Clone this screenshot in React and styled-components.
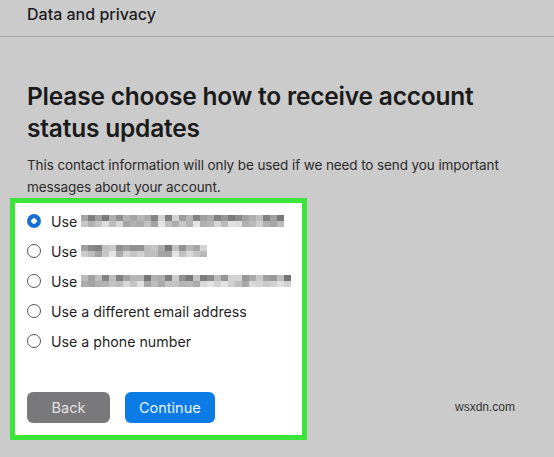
import styled, { createGlobalStyle } from "styled-components";

const GlobalStyle = createGlobalStyle`
  body {
    margin: 0;
    background: #cbcbcb;
    font-family: Inter, "Noto Sans", sans-serif;
    color: #1c1c1e;
  }
`;

// fake pixelated text, shades per column: [top, bottom]
function makeCells(count, seed) {
  const cells = [];
  let s = seed;
  for (let i = 0; i < count; i++) {
    s = (s * 9301 + 49297) % 233280;
    const r = s / 233280;
    s = (s * 9301 + 49297) % 233280;
    const r2 = s / 233280;
    cells.push([Math.round(115 + r * 100), Math.round(160 + r2 * 70)]);
  }
  return cells;
}

const options = [
  { label: "Use", blur: makeCells(29, 7), checked: true },
  { label: "Use", blur: makeCells(18, 31) },
  { label: "Use", blur: makeCells(30, 113) },
  { label: "Use a different email address" },
  { label: "Use a phone number" },
];

function App() {
  return (
    <Page>
      <GlobalStyle />
      <Header>Data and privacy</Header>
      <Content>
        <Title>Please choose how to receive account status updates</Title>
        <Intro>
          This contact information will only be used if we need to send you
          important messages about your account.
        </Intro>
        <Highlight>
          <OptionList>
            {options.map((o, i) => (
              <Option key={i}>
                <Radio $checked={o.checked} />
                <span>{o.label}</span>
                {o.blur && (
                  <Blur>
                    {o.blur.map((c, j) => (
                      <Cell key={j}>
                        <Pixel $g={c[0]} />
                        <Pixel $g={c[1]} />
                      </Cell>
                    ))}
                  </Blur>
                )}
              </Option>
            ))}
          </OptionList>
          <Buttons>
            <Button $kind="back">Back</Button>
            <Button>Continue</Button>
          </Buttons>
        </Highlight>
      </Content>
      <Watermark>wsxdn.com</Watermark>
    </Page>
  );
}

export default App;

const Page = styled.div`
  position: relative;
  width: 554px;
  height: 457px;
  overflow: hidden;
`;

const Header = styled.div`
  height: 37px;
  box-sizing: border-box;
  padding: 4px 27px 0;
  font-size: 16px;
  font-weight: 500;
  line-height: 20px;
  border-bottom: 1px solid #a6a6a6;
`;

const Content = styled.div`
  padding: 0 27px;
`;

const Title = styled.h1`
  margin: 43px 0 10px;
  font-size: 24.5px;
  font-weight: 600;
  line-height: 32px;
  letter-spacing: -0.2px;
  color: #1a1a1a;
`;

const Intro = styled.p`
  margin: 0;
  font-size: 13.5px;
  line-height: 22px;
  color: #2a2a2a;
  letter-spacing: -0.1px;
`;

const Highlight = styled.div`
  margin-left: -17px;
  width: 297px;
  box-sizing: border-box;
  border: 5px solid #3ce53a;
  background: #fff;
  padding: 3px 12px 12px;
`;

const OptionList = styled.div`
  display: flex;
  flex-direction: column;
`;

const Option = styled.div`
  display: flex;
  align-items: center;
  height: 30px;
  font-size: 14.2px;
  color: #1f1f1f;
`;

const Radio = styled.span`
  width: 14px;
  height: 14px;
  margin-right: 10px;
  border-radius: 50%;
  box-sizing: border-box;
  flex-shrink: 0;
  border: ${(p) => (p.$checked ? "none" : "1px solid #555")};
  background: ${(p) =>
    p.$checked
      ? "radial-gradient(circle, #fff 0 2.5px, #1a6fd6 3px)"
      : "#fff"};
`;

const Blur = styled.span`
  display: flex;
  margin-left: 4px;
  filter: blur(0.6px);
`;

const Cell = styled.span`
  display: flex;
  flex-direction: column;
`;

const Pixel = styled.span`
  width: 7px;
  height: 6px;
  background: ${(p) => `rgb(${p.$g},${p.$g},${p.$g})`};
`;

const Buttons = styled.div`
  display: flex;
  gap: 15px;
  margin-top: 36px;
`;

const Button = styled.button`
  height: 31px;
  padding: 0 ${(p) => (p.$kind === "back" ? "24px" : "14px")};
  min-width: ${(p) => (p.$kind === "back" ? "83px" : "88px")};
  border: none;
  border-radius: 6px;
  font-family: inherit;
  font-size: 14.5px;
  background: ${(p) => (p.$kind === "back" ? "#79797b" : "#0b7be6")};
  color: ${(p) => (p.$kind === "back" ? "#e2e2e2" : "#e8f3ff")};
`;

const Watermark = styled.div`
  position: absolute;
  left: 455px;
  top: 400px;
  font-family: "Liberation Sans", sans-serif;
  font-size: 12px;
  color: #333;
`;
